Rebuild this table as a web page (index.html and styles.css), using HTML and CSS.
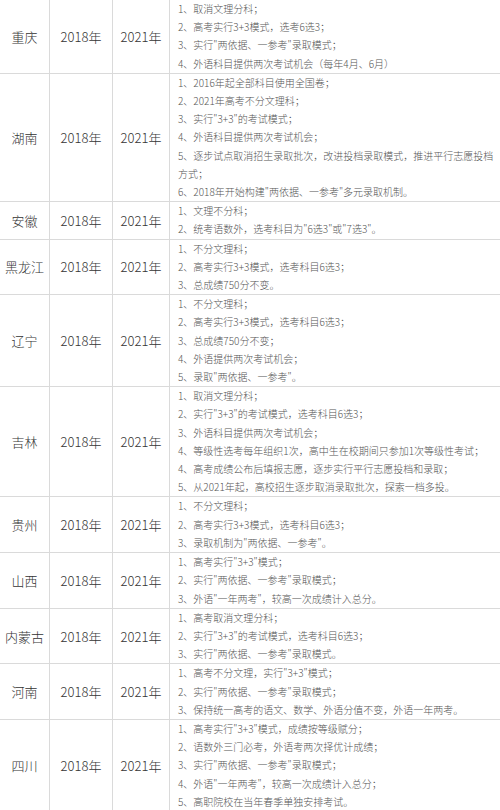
FILE: index.html
```html
<!DOCTYPE html>
<html lang="zh-CN">
<head>
<meta charset="utf-8">
<title>新高考改革省份</title>
<link rel="stylesheet" href="styles.css">
</head>
<body>
<table class="reform">
  <colgroup>
    <col class="c-prov">
    <col class="c-year">
    <col class="c-year2">
    <col class="c-detail">
  </colgroup>
  <tbody>
    <tr>
      <td class="prov">重庆</td><td class="year">2018年</td><td class="year">2021年</td>
      <td class="detail">
        <div>1、取消文理分科；</div>
        <div>2、高考实行3+3模式，选考6选3；</div>
        <div>3、实行"两依据、一参考"录取模式；</div>
        <div>4、外语科目提供两次考试机会（每年4月、6月）</div>
      </td>
    </tr>
    <tr>
      <td class="prov">湖南</td><td class="year">2018年</td><td class="year">2021年</td>
      <td class="detail">
        <div>1、2016年起全部科目使用全国卷；</div>
        <div>2、2021年高考不分文理科；</div>
        <div>3、实行"3+3"的考试模式；</div>
        <div>4、外语科目提供两次考试机会；</div>
        <div>5、逐步试点取消招生录取批次，改进投档录取模式，推进平行志愿投档方式；</div>
        <div>6、2018年开始构建"两依据、一参考"多元录取机制。</div>
      </td>
    </tr>
    <tr>
      <td class="prov">安徽</td><td class="year">2018年</td><td class="year">2021年</td>
      <td class="detail">
        <div>1、文理不分科；</div>
        <div>2、统考语数外，选考科目为"6选3"或"7选3"。</div>
      </td>
    </tr>
    <tr>
      <td class="prov">黑龙江</td><td class="year">2018年</td><td class="year">2021年</td>
      <td class="detail">
        <div>1、不分文理科；</div>
        <div>2、高考实行3+3模式，选考科目6选3；</div>
        <div>3、总成绩750分不变。</div>
      </td>
    </tr>
    <tr>
      <td class="prov">辽宁</td><td class="year">2018年</td><td class="year">2021年</td>
      <td class="detail">
        <div>1、不分文理科；</div>
        <div>2、高考实行3+3模式，选考科目6选3；</div>
        <div>3、总成绩750分不变；</div>
        <div>4、外语提供两次考试机会；</div>
        <div>5、录取"两依据、一参考"。</div>
      </td>
    </tr>
    <tr>
      <td class="prov">吉林</td><td class="year">2018年</td><td class="year">2021年</td>
      <td class="detail">
        <div>1、取消文理分科；</div>
        <div>2、实行"3+3"的考试模式，选考科目6选3；</div>
        <div>3、外语科目提供两次考试机会；</div>
        <div>4、等级性选考每年组织1次，高中生在校期间只参加1次等级性考试；</div>
        <div>4、高考成绩公布后填报志愿，逐步实行平行志愿投档和录取；</div>
        <div>5、从2021年起，高校招生逐步取消录取批次，探索一档多投。</div>
      </td>
    </tr>
    <tr>
      <td class="prov">贵州</td><td class="year">2018年</td><td class="year">2021年</td>
      <td class="detail">
        <div>1、不分文理科；</div>
        <div>2、高考实行3+3模式，选考科目6选3；</div>
        <div>3、录取机制为"两依据、一参考"。</div>
      </td>
    </tr>
    <tr>
      <td class="prov">山西</td><td class="year">2018年</td><td class="year">2021年</td>
      <td class="detail">
        <div>1、高考实行"3+3"模式；</div>
        <div>2、实行"两依据、一参考"录取模式；</div>
        <div>3、外语"一年两考"，较高一次成绩计入总分。</div>
      </td>
    </tr>
    <tr>
      <td class="prov">内蒙古</td><td class="year">2018年</td><td class="year">2021年</td>
      <td class="detail">
        <div>1、高考取消文理分科；</div>
        <div>2、实行"3+3"的考试模式，选考科目6选3；</div>
        <div>3、实行"两依据、一参考"录取模式。</div>
      </td>
    </tr>
    <tr>
      <td class="prov">河南</td><td class="year">2018年</td><td class="year">2021年</td>
      <td class="detail">
        <div>1、高考不分文理，实行"3+3"模式；</div>
        <div>2、实行"两依据、一参考"录取模式；</div>
        <div>3、保持统一高考的语文、数学、外语分值不变，外语一年两考。</div>
      </td>
    </tr>
    <tr>
      <td class="prov">四川</td><td class="year">2018年</td><td class="year">2021年</td>
      <td class="detail">
        <div>1、高考实行"3+3"模式，成绩按等级赋分；</div>
        <div>2、语数外三门必考，外语考两次择优计成绩；</div>
        <div>3、实行"两依据、一参考"录取模式；</div>
        <div>4、外语"一年两考"，较高一次成绩计入总分；</div>
        <div>5、高职院校在当年春季单独安排考试。</div>
      </td>
    </tr>
  </tbody>
</table>
</body>
</html>
```

FILE: styles.css
```css
html, body {
  margin: 0;
  padding: 0;
  background: #ffffff;
}

body {
  font-family: "Noto Sans CJK SC", "Noto Sans", sans-serif;
  font-weight: 300;
  overflow: hidden;
}

.reform {
  border-collapse: collapse;
  table-layout: fixed;
  width: 501px;
  margin: -1px 0 0 -1px;
}

.c-prov { width: 50px; }
.c-year { width: 63px; }
.c-year2 { width: 57px; }
.c-detail { width: 331px; }

.reform td {
  border: 1px solid #dadada;
  padding: 0;
  vertical-align: middle;
}

.prov,
.year {
  text-align: center;
  font-size: 13px;
  color: #333333;
  white-space: nowrap;
}

.reform .detail {
  font-size: 10px;
  line-height: 18.2px;
  color: #555555;
  padding: 0 0 0 8px;
}
```
